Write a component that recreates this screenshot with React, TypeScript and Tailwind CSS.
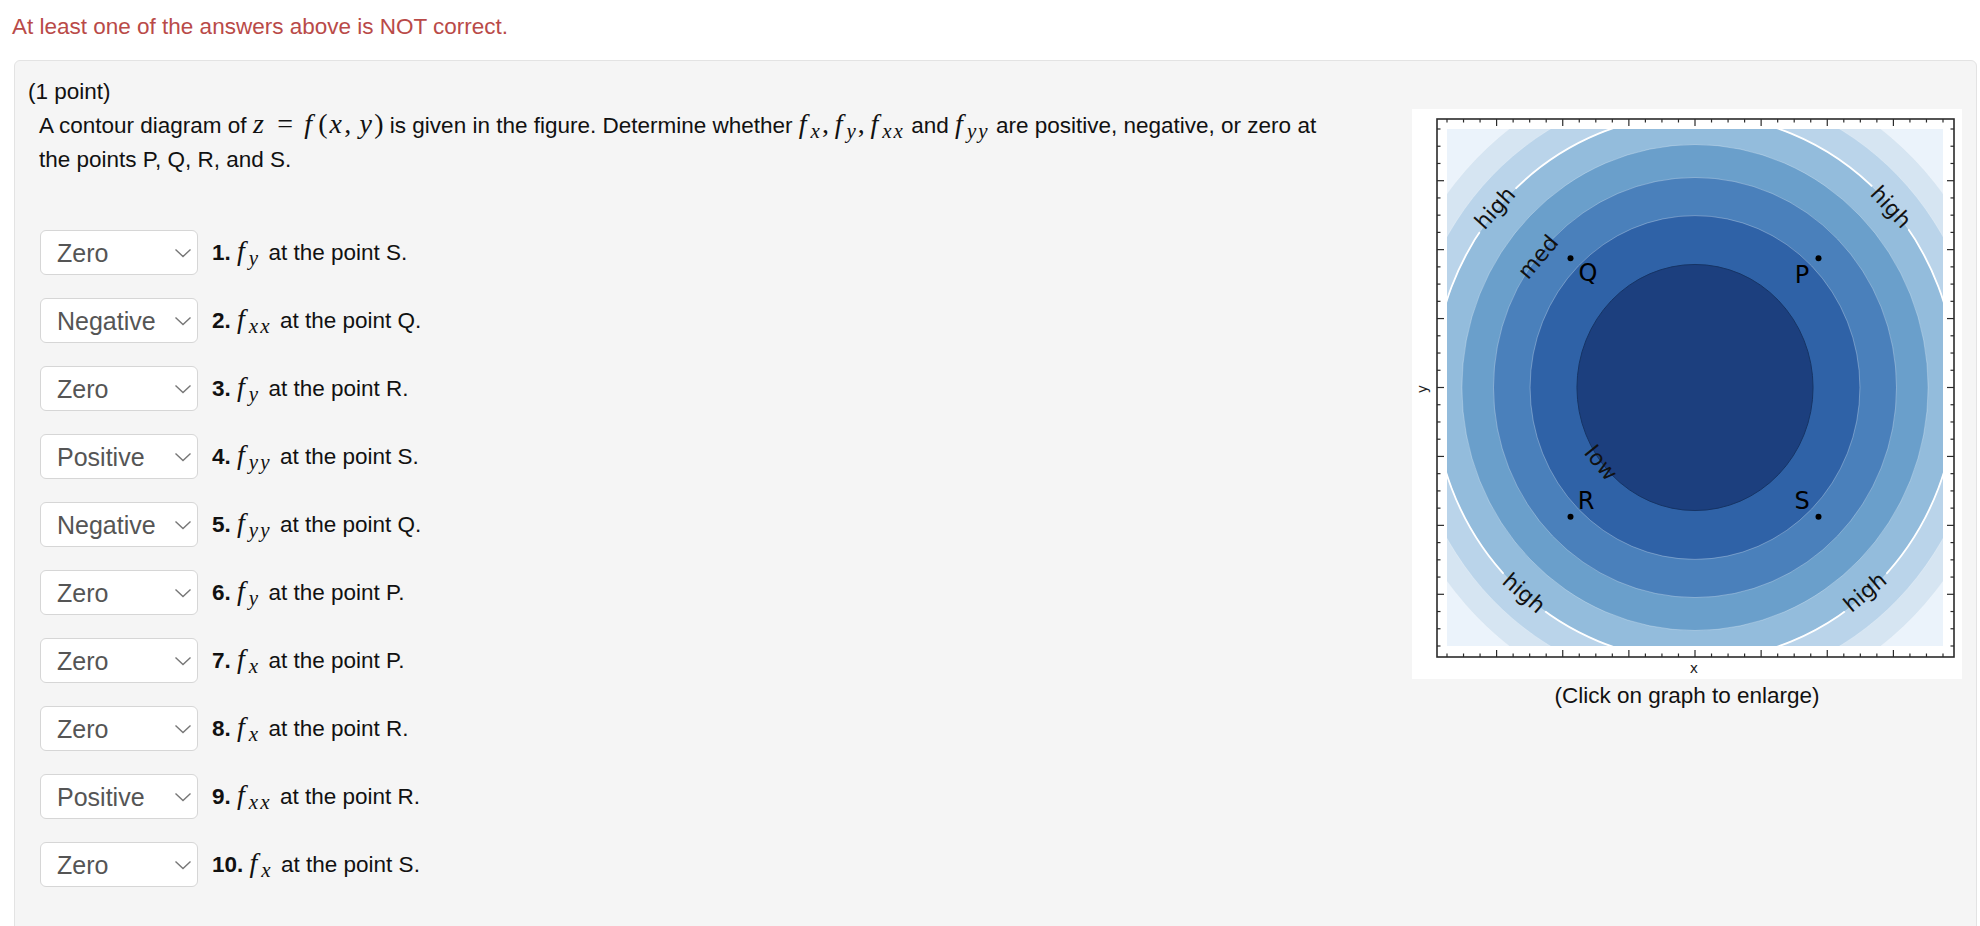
import React from 'react';

const rows = [
  { n: 1, v: 'Zero', sub: 'y', pt: 'S' },
  { n: 2, v: 'Negative', sub: 'xx', pt: 'Q' },
  { n: 3, v: 'Zero', sub: 'y', pt: 'R' },
  { n: 4, v: 'Positive', sub: 'yy', pt: 'S' },
  { n: 5, v: 'Negative', sub: 'yy', pt: 'Q' },
  { n: 6, v: 'Zero', sub: 'y', pt: 'P' },
  { n: 7, v: 'Zero', sub: 'x', pt: 'P' },
  { n: 8, v: 'Zero', sub: 'x', pt: 'R' },
  { n: 9, v: 'Positive', sub: 'xx', pt: 'R' },
  { n: 10, v: 'Zero', sub: 'x', pt: 'S' },
];

// MathJax-ish inline math
function I({ children, className = '' }: { children: React.ReactNode; className?: string }) {
  return <span className={`font-['Liberation_Serif',serif] italic text-[28px] leading-none tracking-[0.08em] ${className}`}>{children}</span>;
}

function Up({ children, className = '' }: { children: React.ReactNode; className?: string }) {
  return <span className={`font-['Liberation_Serif',serif] text-[28px] leading-none ${className}`}>{children}</span>;
}

function F({ sub, className = '' }: { sub: string; className?: string }) {
  return (
    <span className={`font-['Liberation_Serif',serif] italic text-[28px] leading-none whitespace-nowrap ${className}`}>
      f<sub className="text-[21px] pl-[4px] tracking-[0.1em]">{sub}</sub>
    </span>
  );
}

function Chevron() {
  return (
    <svg className="absolute right-[6px] top-1/2 -translate-y-1/2 pointer-events-none" width="18" height="10" viewBox="0 0 18 10">
      <polyline points="1.5,1.5 9,8.5 16.5,1.5" fill="none" stroke="#777" strokeWidth="1.4" />
    </svg>
  );
}

function Answer({ value }: { value: string }) {
  return (
    <div className="relative w-[158px] h-[45px] shrink-0">
      <select
        defaultValue={value}
        className="appearance-none w-full h-full bg-white border border-[#d6d6d6] rounded-[6px] pl-[16px] text-[25px] text-[#555] outline-none"
      >
        <option>?</option>
        <option>Positive</option>
        <option>Negative</option>
        <option>Zero</option>
      </select>
      <Chevron />
    </div>
  );
}

// contour plot (z = x^2 + y^2 with equally spaced levels)
const CX = 283;
const CY = 278.5;
const RX = 248;
const RY = 258.5;
const bands: [number, string][] = [
  [1.25, '#d6e5f2'],
  [1.158, '#bad4ea'],
  [1.056, '#93bcdc'],
  [0.94, '#6a9fcb'],
  [0.8125, '#4a80bb'],
  [0.665, '#2f62a7'],
  [0.476, '#1c3f7e'],
];

const labels = [
  { t: 'high', x: 83, y: 99, a: -48 },
  { t: 'high', x: 479, y: 98, a: 47 },
  { t: 'high', x: 112, y: 484, a: 41 },
  { t: 'high', x: 453, y: 483, a: -40 },
  { t: 'med', x: 126, y: 148, a: -50 },
  { t: 'low', x: 189, y: 354, a: 51 },
];

const points = [
  { t: 'Q', dx: 158.5, dy: 149.3, lx: 176, ly: 164 },
  { t: 'P', dx: 406.5, dy: 149.3, lx: 390, ly: 166 },
  { t: 'R', dx: 158.5, dy: 407.7, lx: 174, ly: 392 },
  { t: 'S', dx: 406.5, dy: 407.7, lx: 390, ly: 392 },
];

function Plot() {
  const ticks = Array.from({ length: 31 }, (_, i) => i - 15);
  return (
    <svg width="550" height="570" viewBox="0 0 550 570" className="block">
      <defs>
        <clipPath id="fill">
          <rect x="35" y="20" width="496" height="517" />
        </clipPath>
        <mask id="gaps">
          <rect x="0" y="0" width="550" height="570" fill="white" />
          {labels.slice(0, 4).map((l, i) => (
            <rect key={i} x={l.x - 28} y={l.y - 11} width="56" height="22" fill="black" transform={`rotate(${l.a} ${l.x} ${l.y})`} />
          ))}
        </mask>
      </defs>
      <rect x="0" y="0" width="550" height="570" fill="white" />
      <g clipPath="url(#fill)">
        <rect x="35" y="20" width="496" height="517" fill="#ebf3fb" />
        {bands.map(([r, c], i) => (
          <ellipse key={i} cx={CX} cy={CY} rx={r * RX} ry={r * RY} fill={c} stroke={i === 6 ? '#163465' : 'rgba(255,255,255,0.28)'} strokeWidth="1" />
        ))}
        <ellipse cx={CX} cy={CY} rx={1.056 * RX} ry={1.056 * RY} fill="none" stroke="white" strokeWidth="1.8" mask="url(#gaps)" />
      </g>
      {labels.map((l, i) => (
        <text
          key={i}
          x={l.x}
          y={l.y}
          fontFamily="DejaVu Sans, sans-serif"
          fontSize="22"
          textAnchor="middle"
          dominantBaseline="central"
          fill="#111"
          transform={`rotate(${l.a} ${l.x} ${l.y})`}
        >
          {l.t}
        </text>
      ))}
      {points.map((p) => (
        <g key={p.t}>
          <circle cx={p.dx} cy={p.dy} r="3" fill="#000" />
          <text x={p.lx} y={p.ly} fontFamily="DejaVu Sans, sans-serif" fontSize="24" textAnchor="middle" dominantBaseline="central" fill="#000">
            {p.t}
          </text>
        </g>
      ))}
      <g stroke="#2b2b2b" strokeWidth="1.2">
        {ticks.map((k) => {
          const x = CX + (k * RX) / 15;
          const y = CY + (k * RY) / 15;
          const len = k % 4 === 0 ? 7 : 3.5;
          return (
            <g key={k}>
              <line x1={x} y1={10} x2={x} y2={10 + len} />
              <line x1={x} y1={548} x2={x} y2={548 - len} />
              <line x1={25} y1={y} x2={25 + len} y2={y} />
              <line x1={542} y1={y} x2={542 - len} y2={y} />
            </g>
          );
        })}
      </g>
      <rect x="25" y="10" width="517" height="538" fill="none" stroke="#2b2b2b" strokeWidth="1.6" />
      <text x="282" y="559" fontFamily="DejaVu Sans, sans-serif" fontSize="14" textAnchor="middle" dominantBaseline="central" fill="#222">
        x
      </text>
      <text x="10" y="280" fontFamily="DejaVu Sans, sans-serif" fontSize="14" textAnchor="middle" dominantBaseline="central" fill="#222" transform="rotate(-90 10 280)">
        y
      </text>
    </svg>
  );
}

export default function App() {
  return (
    <div className="h-[926px] overflow-hidden bg-white font-['Liberation_Sans',Arial,sans-serif] text-[22.5px] leading-[34px] text-[#111]">
      <div className="pl-[12px] pt-[10px] h-[60px] text-[#b94a48]">At least one of the answers above is NOT correct.</div>

      <div className="ml-[14px] mr-[3px] min-h-[900px] bg-[#f5f5f5] border border-[#e3e3e3] rounded-[6px] pt-[14px] pl-[13px] pr-[14px]">
        <div>(1 point)</div>
        <div className="flex justify-between">
          <div>
            <p className="ml-[11px] w-[1330px]">
              A contour diagram of <I>z</I>
              <Up className="mx-[0.4em]">=</Up>
              <I className="mr-[4px]">f</I>
              <Up className="mr-[2px]">(</Up>
              <I>x</I>
              <Up className="mr-[0.3em]">,</Up>
              <I>y</I>
              <Up>)</Up> is given in the figure. Determine whether <F sub="x" />
              <Up className="mr-[0.2em]">,</Up>
              <F sub="y" />
              <Up className="mr-[0.2em]">,</Up>
              <F sub="xx" /> and <F sub="yy" /> are positive, negative, or zero at
              <br />
              the points P, Q, R, and S.
            </p>

            <div className="mt-[53px] ml-[12px] flex flex-col gap-[23px]">
              {rows.map((r) => (
                <div key={r.n} className="flex items-center gap-[14px] h-[45px]">
                  <Answer value={r.v} />
                  <div className="whitespace-nowrap">
                    <span className="font-bold">{r.n}.</span> <F sub={r.sub} className="mr-[2px]" /> at the point {r.pt}.
                  </div>
                </div>
              ))}
            </div>
          </div>

          <div className="w-[550px] shrink-0 text-center">
            <Plot />
            <div>(Click on graph to enlarge)</div>
          </div>
        </div>
      </div>
    </div>
  );
}
